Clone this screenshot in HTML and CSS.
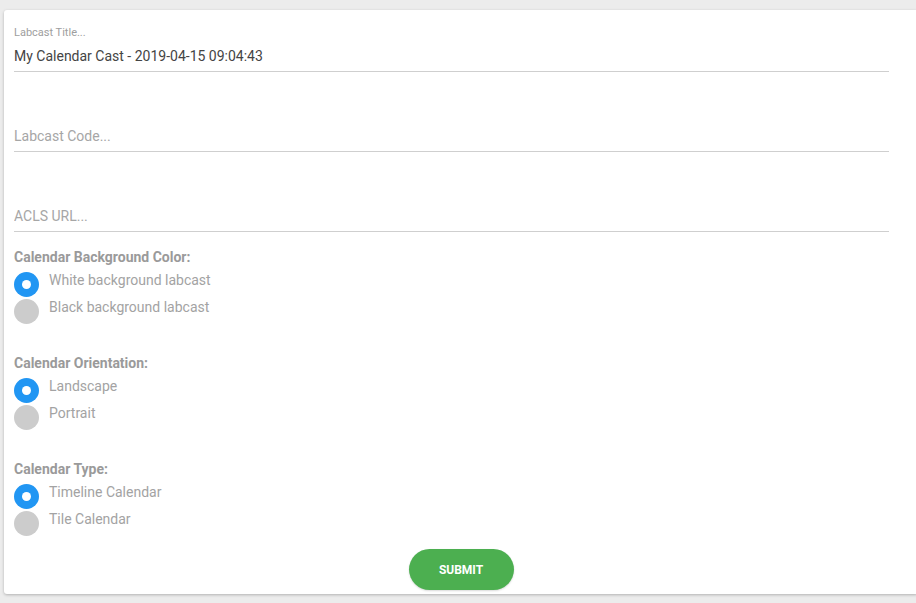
FILE: index.html
```html
<!DOCTYPE html>
<html lang="en">
<head>
  <meta charset="UTF-8">
  <title>Labcast</title>
  <link rel="stylesheet" href="styles.css">
</head>
<body>
  <form class="card">
    <div class="field">
      <label class="field-label">Labcast Title...</label>
      <input class="field-input" type="text" value="My Calendar Cast - 2019-04-15 09:04:43">
    </div>
    <div class="field">
      <label class="field-label"></label>
      <input class="field-input" type="text" placeholder="Labcast Code...">
    </div>
    <div class="field last">
      <label class="field-label"></label>
      <input class="field-input" type="text" placeholder="ACLS URL...">
    </div>

    <div class="group">
      <h4>Calendar Background Color:</h4>
      <div class="radio-row"><span class="radio checked"></span><span class="radio-text">White background labcast</span></div>
      <div class="radio-row"><span class="radio"></span><span class="radio-text">Black background labcast</span></div>
    </div>

    <div class="group">
      <h4>Calendar Orientation:</h4>
      <div class="radio-row"><span class="radio checked"></span><span class="radio-text">Landscape</span></div>
      <div class="radio-row"><span class="radio"></span><span class="radio-text">Portrait</span></div>
    </div>

    <div class="group">
      <h4>Calendar Type:</h4>
      <div class="radio-row"><span class="radio checked"></span><span class="radio-text">Timeline Calendar</span></div>
      <div class="radio-row"><span class="radio"></span><span class="radio-text">Tile Calendar</span></div>
    </div>

    <div class="actions">
      <button type="button" class="submit-btn">SUBMIT</button>
    </div>
  </form>
</body>
</html>
```

FILE: styles.css
```css
* {
  margin: 0;
  padding: 0;
  box-sizing: border-box;
}

body {
  font-family: Roboto, 'Liberation Sans', sans-serif;
  background: #ececec;
  overflow: hidden;
  height: 603px;
}

.card {
  margin: 10px 0 0 4px;
  width: 914px;
  background: #fff;
  border-radius: 3px;
  box-shadow: 0 1px 3px rgba(0, 0, 0, 0.25);
  padding: 16px 10px 4px;
}

.field {
  margin-right: 19px;
  margin-bottom: 34px;
}

.field.last {
  margin-bottom: 16px;
}

.field-label {
  display: block;
  height: 14px;
  font-size: 11px;
  line-height: 14px;
  color: #9e9e9e;
}

.field-input {
  display: block;
  width: 100%;
  height: 32px;
  border: none;
  border-bottom: 1px solid #cfcfcf;
  font-family: inherit;
  font-size: 14px;
  color: #444;
  outline: none;
  padding: 1px 0 1px;
}

.field-input::placeholder {
  color: #a6a6a6;
}

.group {
  margin-bottom: 29px;
}

.group h4 {
  font-size: 14px;
  font-weight: 700;
  line-height: 18px;
  color: #9a9a9a;
  margin-bottom: 5px;
}

.radio-row {
  display: flex;
  align-items: flex-start;
  height: 27px;
}

.radio {
  width: 25px;
  height: 25px;
  border-radius: 50%;
  background: #cccccc;
  margin-top: 1px;
  margin-right: 10px;
  flex-shrink: 0;
  position: relative;
}

.radio.checked {
  background: #2196f3;
}

.radio.checked::after {
  content: "";
  position: absolute;
  left: 8px;
  top: 8px;
  width: 9px;
  height: 9px;
  border-radius: 50%;
  background: #fff;
}

.radio-text {
  font-size: 14px;
  line-height: 18px;
  color: #a3a3a3;
}

.actions {
  display: flex;
  justify-content: center;
  margin-top: -17px;
}

.submit-btn {
  background: #4caf50;
  color: #fff;
  border: none;
  width: 105px;
  height: 41px;
  border-radius: 21px;
  font-family: inherit;
  font-size: 12px;
  font-weight: 700;
  box-shadow: 0 1px 2px rgba(0, 0, 0, 0.15);
}
```
